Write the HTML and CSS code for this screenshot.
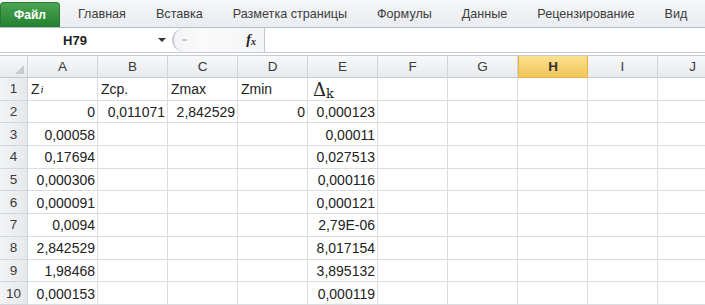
FILE: index.html
```
<!DOCTYPE html>
<html lang="ru">

<head>
	<meta charset="UTF-8">
	<title>Excel</title>
	<link rel="stylesheet" href="styles.css">
</head>

<body>
	<div class="tabs">
		<div class="tab file">Файл</div>
		<div class="tab">Главная</div>
		<div class="tab">Вставка</div>
		<div class="tab">Разметка страницы</div>
		<div class="tab">Формулы</div>
		<div class="tab">Данные</div>
		<div class="tab">Рецензирование</div>
		<div class="tab">Вид</div>
	</div>

	<div class="fbar">
		<div class="namebox">H79</div>
		<div class="arrow"></div>
		<div class="pill">
			<span class="dash"></span>
			<span class="fx">f<sub>x</sub></span>
		</div>
		<div class="formula"></div>
	</div>

	<div class="sheet">
		<div class="corner"><span class="tri"></span></div>
		<div class="ch">A</div>
		<div class="ch">B</div>
		<div class="ch">C</div>
		<div class="ch">D</div>
		<div class="ch">E</div>
		<div class="ch">F</div>
		<div class="ch">G</div>
		<div class="ch sel">H</div>
		<div class="ch">I</div>
		<div class="ch">J</div>

		<div class="rh">1</div>
		<div class="c l">Z<i class="zi">i</i></div>
		<div class="c l">Zср.</div>
		<div class="c l">Zmax</div>
		<div class="c l">Zmin</div>
		<div class="c l"><span class="delta">Δ</span><span class="k">k</span></div>
		<div class="c"></div><div class="c"></div><div class="c"></div><div class="c"></div><div class="c"></div>

		<div class="rh">2</div>
		<div class="c">0</div>
		<div class="c">0,011071</div>
		<div class="c">2,842529</div>
		<div class="c">0</div>
		<div class="c">0,000123</div>
		<div class="c"></div><div class="c"></div><div class="c"></div><div class="c"></div><div class="c"></div>

		<div class="rh">3</div>
		<div class="c">0,00058</div>
		<div class="c"></div><div class="c"></div><div class="c"></div>
		<div class="c">0,00011</div>
		<div class="c"></div><div class="c"></div><div class="c"></div><div class="c"></div><div class="c"></div>

		<div class="rh">4</div>
		<div class="c">0,17694</div>
		<div class="c"></div><div class="c"></div><div class="c"></div>
		<div class="c">0,027513</div>
		<div class="c"></div><div class="c"></div><div class="c"></div><div class="c"></div><div class="c"></div>

		<div class="rh">5</div>
		<div class="c">0,000306</div>
		<div class="c"></div><div class="c"></div><div class="c"></div>
		<div class="c">0,000116</div>
		<div class="c"></div><div class="c"></div><div class="c"></div><div class="c"></div><div class="c"></div>

		<div class="rh">6</div>
		<div class="c">0,000091</div>
		<div class="c"></div><div class="c"></div><div class="c"></div>
		<div class="c">0,000121</div>
		<div class="c"></div><div class="c"></div><div class="c"></div><div class="c"></div><div class="c"></div>

		<div class="rh">7</div>
		<div class="c">0,0094</div>
		<div class="c"></div><div class="c"></div><div class="c"></div>
		<div class="c">2,79E-06</div>
		<div class="c"></div><div class="c"></div><div class="c"></div><div class="c"></div><div class="c"></div>

		<div class="rh">8</div>
		<div class="c">2,842529</div>
		<div class="c"></div><div class="c"></div><div class="c"></div>
		<div class="c">8,017154</div>
		<div class="c"></div><div class="c"></div><div class="c"></div><div class="c"></div><div class="c"></div>

		<div class="rh">9</div>
		<div class="c">1,98468</div>
		<div class="c"></div><div class="c"></div><div class="c"></div>
		<div class="c">3,895132</div>
		<div class="c"></div><div class="c"></div><div class="c"></div><div class="c"></div><div class="c"></div>

		<div class="rh">10</div>
		<div class="c">0,000153</div>
		<div class="c"></div><div class="c"></div><div class="c"></div>
		<div class="c">0,000119</div>
		<div class="c"></div><div class="c"></div><div class="c"></div><div class="c"></div><div class="c"></div>
	</div>
</body>

</html>
```

FILE: styles.css
```
body {
	margin: 0;
	padding: 0;
	width: 705px;
	height: 305px;
	overflow: hidden;
	font-family: "Liberation Sans", Arial, sans-serif;
	background-color: #fff;
	color: #222;
}

.tabs {
	display: flex;
	align-items: flex-end;
	height: 27px;
	overflow: hidden;
	background: linear-gradient(#f5f6f8, #e9ecf0);
	border-bottom: 1px solid #b6bcc6;
	font-size: 12.6px;
	color: #3c3c3c;
}

.tab {
	flex-shrink: 0;
	white-space: nowrap;
	height: 25px;
	line-height: 25px;
	padding: 0 15px;
}

.tab.file {
	width: 60px;
	padding: 0;
	text-align: center;
	margin-right: 3px;
	color: #fff;
	font-size: 12px;
	font-weight: bold;
	border-radius: 4px 4px 0 0;
	background: linear-gradient(#4ca552, #21802f);
	border: 1px solid #2a7a30;
	border-bottom: none;
	box-sizing: border-box;
}

.fbar {
	display: flex;
	align-items: center;
	height: 24px;
	background-color: #fff;
	border-bottom: 1px solid #c6cbd3;
}

.namebox {
	width: 150px;
	text-align: center;
	font-size: 13px;
	font-weight: bold;
	color: #222;
}

.arrow {
	width: 0;
	height: 0;
	margin-left: 8px;
	border-left: 4px solid transparent;
	border-right: 4px solid transparent;
	border-top: 4px solid #333;
}

.pill {
	display: flex;
	align-items: center;
	justify-content: space-between;
	box-sizing: border-box;
	width: 93px;
	height: 24px;
	margin-left: 6px;
	padding: 0 8px 0 8px;
	background: linear-gradient(90deg, #f2f3f5, #fafafa 30%, #f4f5f7);
	border-left: 2px solid #c9ced6;
	border-right: 1px solid #c3c8cf;
	border-radius: 12px 0 0 12px;
}

.dash {
	width: 5px;
	height: 2px;
	background-color: #c4c8ce;
}

.fx {
	font-family: "Liberation Serif", serif;
	font-style: italic;
	font-weight: bold;
	font-size: 14px;
	color: #222;
}

.fx sub {
	font-size: 10px;
	vertical-align: -1px;
}

.formula {
	flex: 1;
}

.sheet {
	display: grid;
	grid-template-columns: 28px repeat(10, 70px);
	grid-template-rows: 22px;
	grid-auto-rows: 22.7px;
	margin-top: 2px;
	border-top: 1px solid #c8ccd2;
	font-size: 14px;
}

.corner,
.ch,
.rh {
	background: linear-gradient(#f7f8f9, #e8ebee);
	color: #3a3a3a;
	box-sizing: border-box;
	border-right: 1px solid #d1d5da;
	border-bottom: 1px solid #c5cad0;
	display: flex;
	align-items: center;
	justify-content: center;
	font-size: 13.5px;
}

.corner {
	position: relative;
}

.tri {
	position: absolute;
	right: 3px;
	bottom: 3px;
	width: 0;
	height: 0;
	border-left: 9px solid transparent;
	border-bottom: 9px solid #c8ccd2;
}

.ch.sel {
	background: linear-gradient(#fbe08e, #f2c659);
	border: 1px solid #eab04a;
	border-top: none;
	color: #333;
	font-weight: bold;
}

.rh {
	background: linear-gradient(90deg, #f2f3f5, #e6e9ec);
	border-bottom: 1px solid #d3d7dc;
}

.c {
	box-sizing: border-box;
	border-right: 1px solid #dadcdf;
	border-bottom: 1px solid #dadcdf;
	display: flex;
	align-items: center;
	justify-content: flex-end;
	padding: 1px 2px 0 3px;
	white-space: nowrap;
	overflow: visible;
}

.c.l {
	justify-content: flex-start;
}

.zi {
	font-family: "Liberation Serif", serif;
	font-size: 11px;
	margin-left: 1px;
}

.delta {
	font-family: "DejaVu Serif", serif;
	font-size: 18px;
	margin-left: 2px;
}

.k {
	font-family: "DejaVu Serif", serif;
	font-size: 13px;
	position: relative;
	top: 4px;
}
```
